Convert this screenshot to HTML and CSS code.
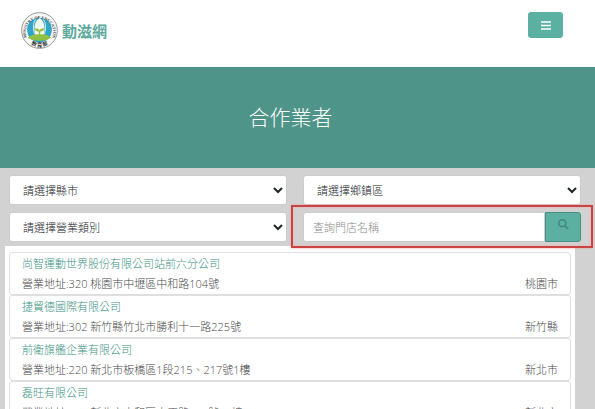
FILE: index.html
```html
<!DOCTYPE html>
<html lang="zh-Hant">

<head>
  <meta charset="utf-8">
  <meta name="viewport" content="width=device-width, initial-scale=1">
  <title>合作業者</title>
  <link rel="stylesheet" href="styles.css">
</head>

<body>
  <header class="navbar">
    <a class="brand" href="#">
      <svg class="brand-logo" viewBox="0 0 36 36" aria-hidden="true">
        <defs>
          <path id="ring-top" d="M6.500 26.500 A13.300 13.300 0 1 1 29.500 26.500" />
          <path id="ring-bottom" d="M5 28 Q18 39.500 31 28" />
        </defs>
        <circle cx="18" cy="18" r="17.400" fill="#f7f8f6" stroke="#7d8784" stroke-width=".8" />
        <circle cx="18" cy="17.500" r="12" fill="#2fa5c9" />
        <path d="M18 5.500 C13 9 12 15 14 24 L22 24 C24 15 23 9 18 5.500Z" fill="#eef8ee" />
        <path d="M14.500 6.500 C12 10 11.500 16 13 21 M21.500 6.500 C24 10 24.500 16 23 21" fill="none" stroke="#bfe3ec" stroke-width="1" />
        <path d="M6.500 25 Q12 20.500 18 22 Q24 20.500 29.500 25 Q24 28.500 18 28 Q12 28.500 6.500 25Z" fill="#8fc044" />
        <path d="M17.300 23 V19 C14.500 19 13.500 17.500 13.200 15.800 C15.800 15.700 17.400 16.500 18 18 C18.600 16.500 20.200 15.700 22.800 15.800 C22.500 17.500 21.500 19 18.700 19 V23Z" fill="#9dbb3c" />
        <text class="logo-ring"><textPath href="#ring-top" startOffset="50%" text-anchor="middle">MINISTRY OF EDUCATION</textPath></text>
        <text class="logo-name"><textPath href="#ring-bottom" startOffset="50%" text-anchor="middle">教 育 部</textPath></text>
      </svg>
      <span class="brand-name">動滋網</span>
    </a>
    <button class="menu-button" type="button" aria-label="選單">
      <svg viewBox="0 0 10 9" aria-hidden="true">
        <path d="M0 1h10M0 4.500h10M0 8h10" stroke="#fff" stroke-width="1.500" />
      </svg>
    </button>
  </header>

  <div class="banner">
    <h1>合作業者</h1>
  </div>

  <main>
    <form class="filters">
      <select class="field" aria-label="縣市">
        <option>請選擇縣市</option>
      </select>
      <select class="field" aria-label="鄉鎮區">
        <option>請選擇鄉鎮區</option>
      </select>
      <select class="field" aria-label="營業類別">
        <option>請選擇營業類別</option>
      </select>
      <div class="search">
        <input class="field" type="text" placeholder="查詢門店名稱" aria-label="門店名稱">
        <button class="search-button" type="submit" aria-label="查詢">
          <svg viewBox="0 0 11 11" aria-hidden="true">
            <circle cx="4.300" cy="4.300" r="3.500" />
            <path d="M6.900 6.900 L10.300 10.300" />
          </svg>
        </button>
      </div>
    </form>

    <div class="stores">
      <article class="store">
        <a href="#">尚智運動世界股份有限公司站前六分公司</a>
        <div class="store-info"><span>營業地址:320 桃園市中壢區中和路104號</span><span>桃園市</span></div>
      </article>
      <article class="store">
        <a href="#">捷貿德國際有限公司</a>
        <div class="store-info"><span>營業地址:302 新竹縣竹北市勝利十一路225號</span><span>新竹縣</span></div>
      </article>
      <article class="store">
        <a href="#">前衛旗艦企業有限公司</a>
        <div class="store-info"><span>營業地址:220 新北市板橋區1段215、217號1樓</span><span>新北市</span></div>
      </article>
      <article class="store">
        <a href="#">磊旺有限公司</a>
        <div class="store-info"><span>營業地址:235 新北市中和區中正路736號10樓</span><span>新北市</span></div>
      </article>
    </div>
  </main>
</body>

</html>
```
FILE: styles.css
```css
* {
  box-sizing: border-box;
}

body {
  margin: 0;
  background: #d2d2d2;
  color: #484848;
  font-family: "Open Sans", "Noto Sans CJK TC", sans-serif;
  font-size: 11px;
  font-weight: 300;
  line-height: 20px;
}

a {
  color: #3b9283;
  text-decoration: none;
}

button {
  padding: 0;
  background: #5cb0a2;
  cursor: pointer;
}

.navbar {
  display: flex;
  justify-content: space-between;
  align-items: flex-start;
  height: 67px;
  padding: 12px 32px 0 21px;
  background: #fff;
}

.brand {
  display: flex;
  align-items: center;
  gap: 4px;
  color: #5aa99b;
}

.brand-logo {
  width: 37px;
  height: 37px;
}

.brand-name {
  font-size: 15px;
  font-weight: bold;
}

.logo-ring {
  fill: #38403e;
  font: bold 4px "Liberation Serif", serif;
}

.logo-name {
  fill: #333;
  font: bold 5px "Noto Sans CJK TC", sans-serif;
}

.menu-button {
  display: flex;
  justify-content: center;
  align-items: center;
  width: 35px;
  height: 26px;
  border: 0;
  border-radius: 3px;
}

.menu-button svg {
  width: 10px;
  height: 9px;
}

.banner {
  padding: 36px 0;
  background: #4f9489;
  color: #fff;
  text-align: center;
}

.banner h1 {
  margin: 0 14px 0 0;
  font-size: 21px;
  font-weight: 300;
  line-height: 29px;
}

.filters {
  display: grid;
  grid-template-columns: 1fr 1fr;
  gap: 7px 16px;
  padding: 7px 14px 4px 9px;
}

.field {
  width: 100%;
  height: 30px;
  padding: 0 9px;
  border: 1px solid #ccc;
  border-radius: 3px;
  background: #fff;
  color: #212529;
  font: inherit;
}

.field::placeholder {
  color: #8a8a8a;
}

.search {
  display: flex;
  position: relative;
}

/* frame that draws attention to the search box */
.search::after {
  content: "";
  position: absolute;
  inset: -7px -12px -6px -12px;
  border: 2px solid #cb4444;
  box-shadow: 0 0 2px #e9a0a0, inset 0 0 3px #f3b0b0;
  pointer-events: none;
}

.search .field {
  flex: 1;
  border-radius: 3px 0 0 3px;
}

.search-button {
  width: 36px;
  padding-bottom: 3px;
  border: 1px solid #488f84;
  border-radius: 0 3px 3px 0;
}

.search-button svg {
  width: 11px;
  height: 11px;
  fill: none;
  stroke: #42887e;
  stroke-width: 1.5;
}

.stores {
  margin: 0 20px 0 5px;
  padding: 6px 4px;
  background: #fff;
}

.store {
  height: 43px;
  padding: 1px 12px 0;
  border: 1px solid #dfdfdf;
  border-radius: 3px;
}

.store-info {
  display: flex;
  justify-content: space-between;
}
```
